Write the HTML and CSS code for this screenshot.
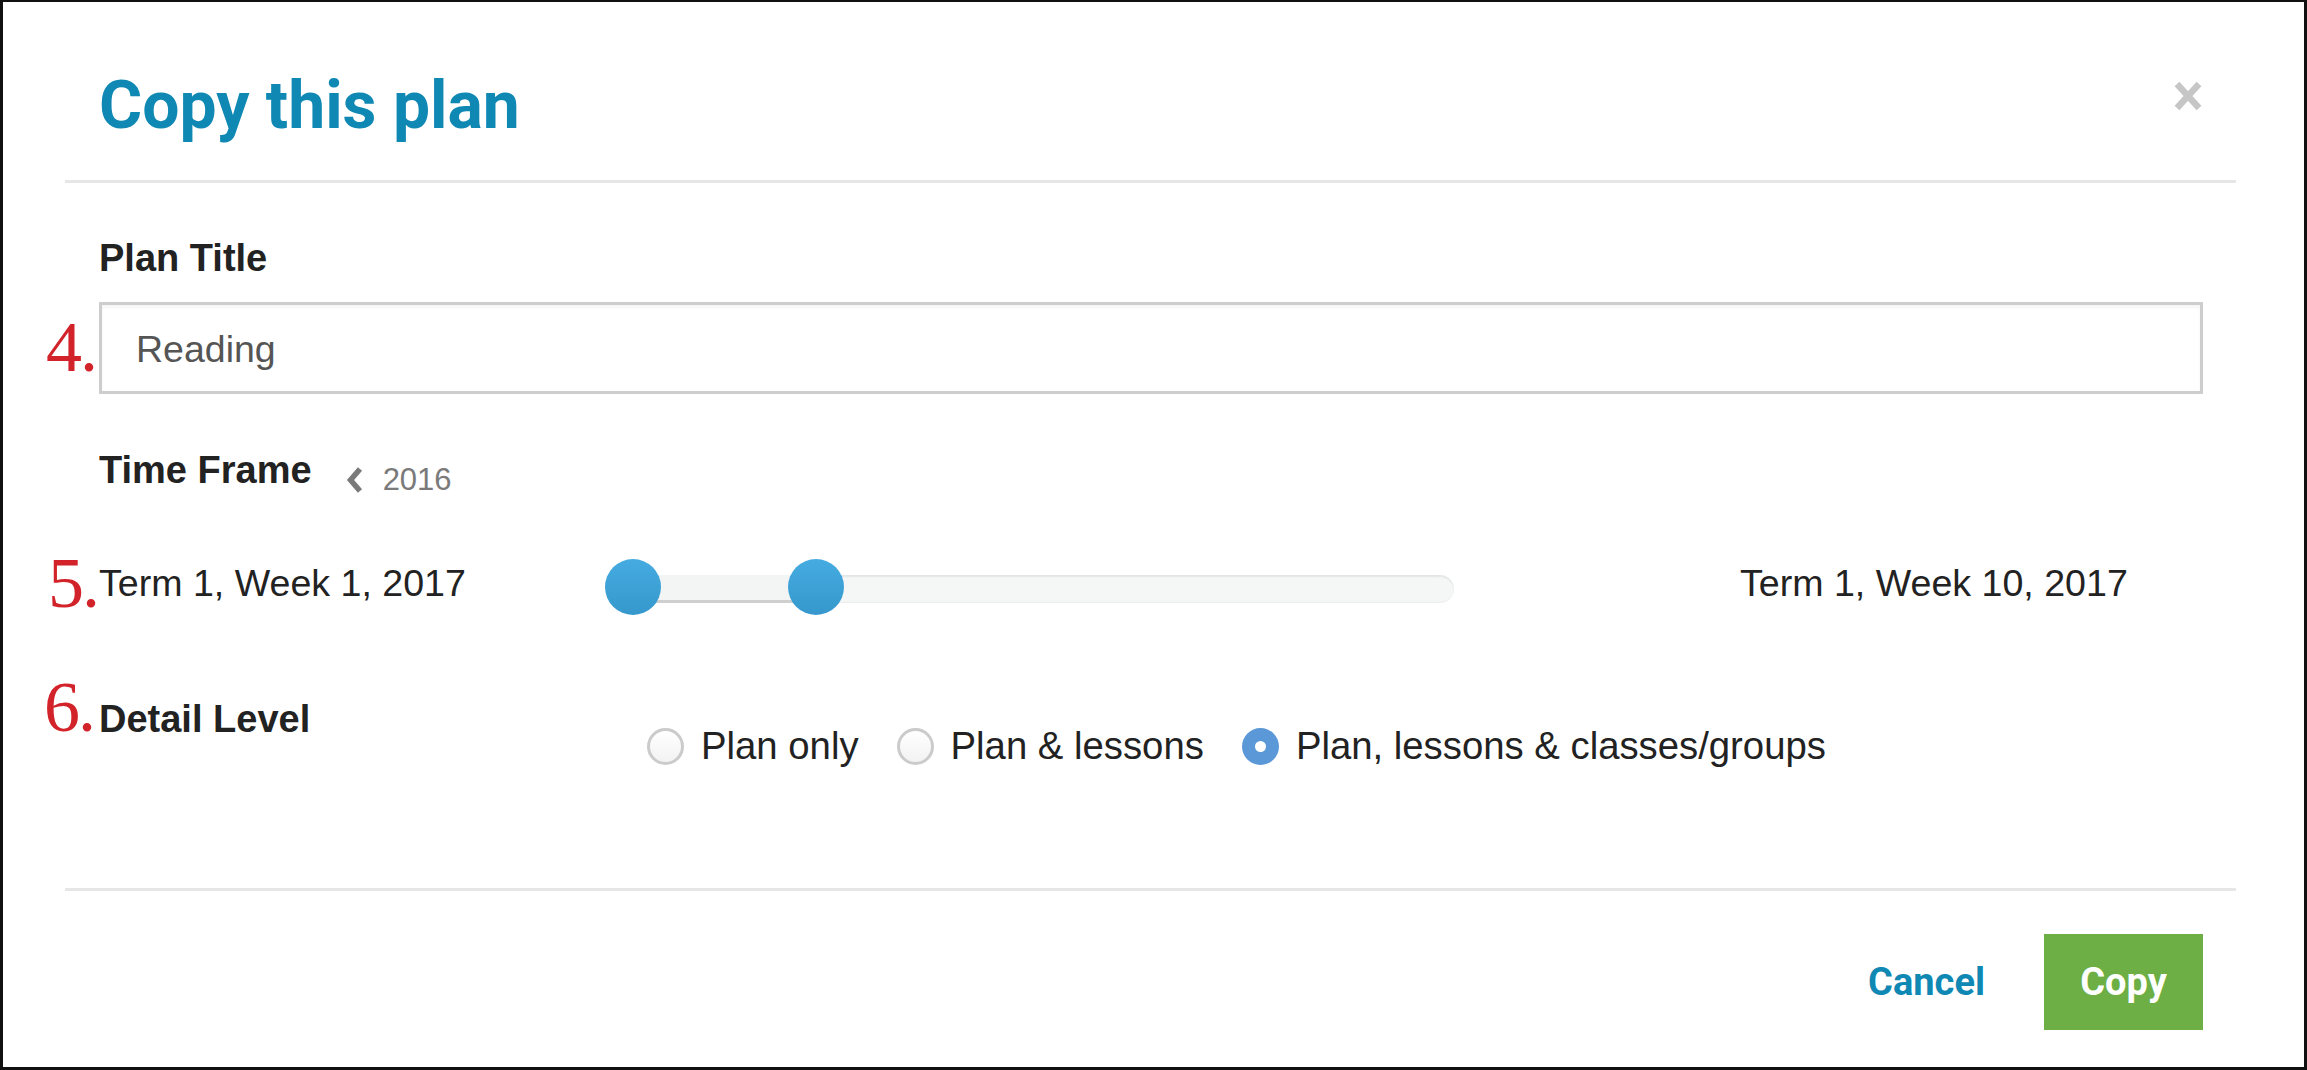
FILE: index.html
```html
<!DOCTYPE html>
<html lang="en">
<head>
<meta charset="utf-8">
<title>Copy this plan</title>
<link rel="stylesheet" href="styles.css">
</head>
<body>
<div class="frame">
  <div class="modal-header">
    <h1 class="modal-title">Copy this plan</h1>
    <button class="close" aria-label="Close">
      <svg width="28" height="30" viewBox="0 0 28 30"><path d="M3 3 L25 27 M25 3 L3 27" stroke="#c6c6c6" stroke-width="6.5" fill="none"/></svg>
    </button>
  </div>
  <div class="divider"></div>
  <div class="modal-body">
    <div class="field-label">Plan Title</div>
    <div class="field-row">
      <span class="marker m4">4.</span>
      <input class="text-input" type="text" value="Reading">
    </div>
    <div class="time-row">
      <span class="field-label">Time Frame</span>
      <span class="year-nav">
        <svg class="chev" width="18" height="28" viewBox="0 0 18 28"><polyline points="14,3 4.5,14 14,25" fill="none" stroke="#7a7a7a" stroke-width="5.5"/></svg>
        <span class="year">2016</span>
      </span>
    </div>
    <div class="term-row">
      <span class="marker m5">5.</span>
      <span class="term term-start">Term 1, Week 1, 2017</span>
      <div class="slider">
        <div class="track"></div>
        <div class="range" style="left:28px;width:183px"></div>
        <span class="thumb" style="left:0"></span>
        <span class="thumb" style="left:183px"></span>
      </div>
      <span class="term term-end">Term 1, Week 10, 2017</span>
    </div>
    <div class="detail-row">
      <span class="marker m6">6.</span>
      <span class="field-label detail-label">Detail Level</span>
      <div class="radios">
        <label class="radio"><span class="circle"></span>Plan only</label>
        <label class="radio"><span class="circle"></span>Plan &amp; lessons</label>
        <label class="radio"><span class="circle checked"></span>Plan, lessons &amp; classes/groups</label>
      </div>
    </div>
  </div>
  <div class="divider"></div>
  <div class="modal-footer">
    <a class="cancel">Cancel</a>
    <button class="btn-copy">Copy</button>
  </div>
</div>
</body>
</html>
```
FILE: styles.css
```css
html, body {
  margin: 0;
  padding: 0;
  background: #ffffff;
}

.frame {
  width: 2307px;
  height: 1070px;
  box-sizing: border-box;
  border: 3px solid #111111;
  border-top-width: 2px;
  padding: 0 68px 0 62px;
  display: flex;
  flex-direction: column;
  background: #ffffff;
  font-family: "Liberation Sans", Arial, sans-serif;
  color: #262626;
}

.modal-header {
  display: flex;
  justify-content: space-between;
  align-items: flex-start;
  padding: 71px 34px 41px 34px;
}

.modal-title {
  margin: 0;
  font-family: Roboto, "Liberation Sans", sans-serif;
  font-weight: 700;
  font-size: 66px;
  line-height: 66px;
  color: #0f88b4;
}

.close {
  border: 0;
  background: none;
  padding: 0;
  margin-top: 8px;
  width: 28px;
  height: 30px;
  display: block;
}

.close svg {
  display: block;
}

.divider {
  height: 3px;
  background: #e6e6e6;
  flex-shrink: 0;
}

.modal-body {
  padding: 54px 33px 121px 34px;
}

.field-label {
  font-weight: 700;
  font-size: 38px;
  line-height: 42px;
  color: #222222;
}

.field-row {
  position: relative;
  margin-top: 23px;
}

.marker {
  position: absolute;
  font-family: "Liberation Serif", "Times New Roman", serif;
  font-size: 72px;
  line-height: 72px;
  color: #d2232a;
  letter-spacing: -2px;
}

.m4 { left: -53px; top: 9px; }
.m5 { left: -51px; top: -12px; }
.m6 { left: -55px; top: -27px; }

.text-input {
  display: block;
  width: 100%;
  height: 92px;
  box-sizing: border-box;
  border: 3px solid #cdcdcd;
  border-radius: 0;
  padding: 3px 34px 0 34px;
  margin: 0;
  font-family: "Liberation Sans", Arial, sans-serif;
  font-size: 37.5px;
  color: #555555;
  background: #ffffff;
  box-shadow: inset 0 3px 3px rgba(0, 0, 0, 0.04);
  outline: none;
}

.time-row {
  display: flex;
  align-items: flex-start;
  margin-top: 55px;
}

.year-nav {
  display: flex;
  align-items: center;
  height: 42px;
  margin-top: 10px;
  margin-left: 34px;
}

.chev {
  display: block;
}

.year {
  margin-left: 19px;
  font-size: 31px;
  line-height: 42px;
  color: #7a7a7a;
}

.term-row {
  position: relative;
  display: flex;
  align-items: flex-start;
  margin-top: 58px;
}

.term {
  font-size: 37.6px;
  line-height: 42px;
  color: #222222;
  margin-top: 3px;
  white-space: nowrap;
}

.term-start {
  width: 506px;
  flex-shrink: 0;
}

.term-end {
  margin-left: 286px;
}

.slider {
  position: relative;
  width: 849px;
  height: 56px;
  flex-shrink: 0;
}

.track {
  position: absolute;
  left: 10px;
  right: 0;
  top: 16px;
  height: 28px;
  border-radius: 14px;
  background: #f5f6f6;
  box-shadow: inset 0 2px 2px rgba(0, 0, 0, 0.07), inset 0 -1px 1px rgba(0, 0, 0, 0.04);
}

.range {
  position: absolute;
  top: 16px;
  height: 28px;
  box-sizing: border-box;
  background: #f3f4f4;
  border-bottom: 3px solid #cfcfcf;
}

.thumb {
  position: absolute;
  top: 0;
  width: 56px;
  height: 56px;
  border-radius: 50%;
  background: linear-gradient(180deg, #45abe0 0%, #3698cd 100%);
}

.detail-row {
  position: relative;
  display: flex;
  align-items: flex-start;
  margin-top: 83px;
}

.detail-label {
  width: 548px;
  flex-shrink: 0;
}

.radios {
  display: flex;
  align-items: center;
  margin-top: 27px;
}

.radio {
  display: flex;
  align-items: center;
  gap: 17px;
  margin-right: 38px;
  font-size: 38.3px;
  line-height: 42px;
  color: #222222;
  white-space: nowrap;
}

.circle {
  width: 37px;
  height: 37px;
  box-sizing: border-box;
  border-radius: 50%;
  border: 3px solid #cbcbcb;
  background: linear-gradient(180deg, #ffffff, #f2f2f2);
  flex-shrink: 0;
  position: relative;
}

.circle.checked {
  border: 0;
  background: #5b98d7;
}

.circle.checked::after {
  content: "";
  position: absolute;
  left: 13px;
  top: 13px;
  width: 11px;
  height: 11px;
  border-radius: 50%;
  background: #ffffff;
}

.modal-footer {
  display: flex;
  justify-content: flex-end;
  align-items: center;
  padding: 43px 33px 37px 0;
}

.cancel {
  font-family: Roboto, "Liberation Sans", sans-serif;
  font-weight: 700;
  font-size: 38px;
  line-height: 42px;
  color: #0f88b4;
  margin-right: 59px;
}

.btn-copy {
  width: 159px;
  height: 96px;
  border: 0;
  margin: 0;
  padding: 0;
  background: #6daf44;
  color: #ffffff;
  font-family: Roboto, "Liberation Sans", sans-serif;
  font-weight: 700;
  font-size: 38px;
  line-height: 96px;
}
```
